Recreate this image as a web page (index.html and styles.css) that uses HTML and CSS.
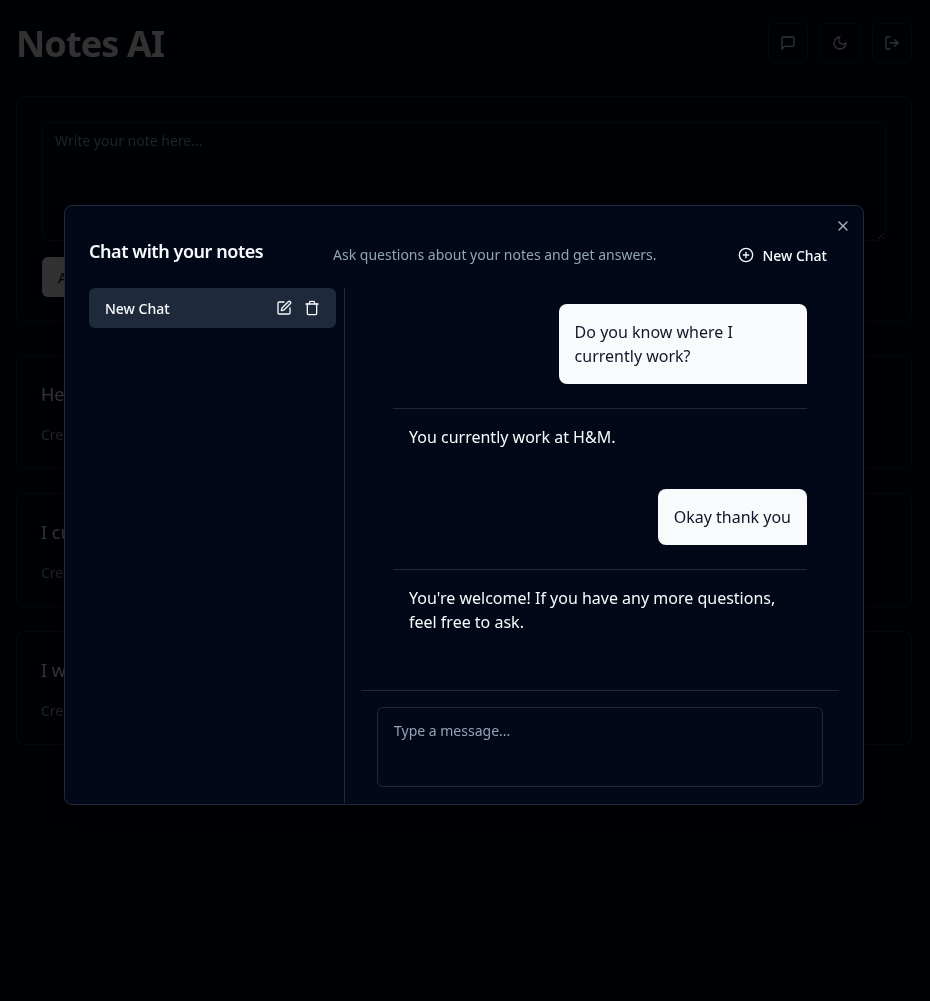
FILE: index.html
```html
<!DOCTYPE html>
<html lang="en">
<head>
  <meta charset="UTF-8" />
  <meta name="viewport" content="width=device-width, initial-scale=1.0" />
  <title>Notes AI</title>
  <link rel="stylesheet" href="styles.css">
</head>
<body>
  <div class="page">
    <header class="top">
      <h1>Notes AI</h1>
      <div class="top-actions">
        <button class="icon-btn" aria-label="Chat">
          <svg class="icon" viewBox="0 0 24 24"><path d="M21 15a2 2 0 0 1-2 2H7l-4 4V5a2 2 0 0 1 2-2h14a2 2 0 0 1 2 2z"/></svg>
        </button>
        <button class="icon-btn" aria-label="Theme">
          <svg class="icon" viewBox="0 0 24 24"><path d="M12 3a6 6 0 0 0 9 9 9 9 0 1 1-9-9Z"/></svg>
        </button>
        <button class="icon-btn" aria-label="Log out">
          <svg class="icon" viewBox="0 0 24 24"><path d="M9 21H5a2 2 0 0 1-2-2V5a2 2 0 0 1 2-2h4"/><path d="m16 17 5-5-5-5"/><path d="M21 12H9"/></svg>
        </button>
      </div>
    </header>

    <section class="card composer">
      <textarea class="note-input" placeholder="Write your note here..."></textarea>
      <button class="add-btn">Add Note</button>
    </section>

    <section class="notes">
      <article class="card note">
        <p class="note-text">Hello</p>
        <p class="note-date">Created: 1/15/2025</p>
      </article>
      <article class="card note">
        <p class="note-text">I currently work at H&amp;M</p>
        <p class="note-date">Created: 1/15/2025</p>
      </article>
      <article class="card note">
        <p class="note-text">I went to the gym today</p>
        <p class="note-date">Created: 1/15/2025</p>
      </article>
    </section>
  </div>

  <div class="overlay">
    <div class="dialog">
      <button class="close-btn" aria-label="Close">
        <svg class="icon" viewBox="0 0 24 24"><path d="M18 6 6 18"/><path d="m6 6 12 12"/></svg>
      </button>

      <div class="dialog-head">
        <h2>Chat with your notes</h2>
        <p class="subtitle">Ask questions about your notes and get answers.</p>
        <button class="new-chat">
          <svg class="icon" viewBox="0 0 24 24"><circle cx="12" cy="12" r="10"/><path d="M8 12h8"/><path d="M12 8v8"/></svg>
          New Chat
        </button>
      </div>

      <div class="dialog-body">
        <aside class="sidebar">
          <div class="chat-item">
            <span>New Chat</span>
            <div class="chat-item-actions">
              <svg class="icon" viewBox="0 0 24 24"><path d="M12 3H5a2 2 0 0 0-2 2v14a2 2 0 0 0 2 2h14a2 2 0 0 0 2-2v-7"/><path d="M18.375 2.625a1 1 0 0 1 3 3l-9.013 9.014a2 2 0 0 1-.853.505l-2.873.84a.5.5 0 0 1-.62-.62l.84-2.873a2 2 0 0 1 .506-.852z"/></svg>
              <svg class="icon" viewBox="0 0 24 24"><path d="M3 6h18"/><path d="M19 6v14c0 1-1 2-2 2H7c-1 0-2-1-2-2V6"/><path d="M8 6V4c0-1 1-2 2-2h4c1 0 2 1 2 2v2"/></svg>
            </div>
          </div>
        </aside>

        <div class="chat">
          <div class="messages">
            <div class="msg-user">Do you know where I currently work?</div>
            <div class="msg-bot">You currently work at H&amp;M.</div>
            <div class="msg-user">Okay thank you</div>
            <div class="msg-bot">You're welcome! If you have any more questions, feel free to ask.</div>
          </div>
          <div class="chat-input">
            <textarea class="message-input" placeholder="Type a message..."></textarea>
          </div>
        </div>
      </div>
    </div>
  </div>
</body>
</html>
```

FILE: styles.css
```css
:root {
  --bg: #020817;
  --text: #f8fafc;
  --muted: #94a3b8;
  --line: #1e293b;
}
* {
  margin: 0;
  padding: 0;
  box-sizing: border-box;
}
html, body {
  height: 100%;
  overflow: hidden;
}
body {
  font-family: "Noto Sans", sans-serif;
  background: var(--bg);
  color: var(--text);
}
button {
  font-family: inherit;
  color: inherit;
  background: transparent;
  border: none;
}
textarea {
  display: block;
  width: 100%;
  font-family: inherit;
  font-size: 14px;
  line-height: 20px;
  color: var(--text);
  background: var(--bg);
  border: 1px solid var(--line);
  border-radius: 6px;
  outline: none;
}
textarea::placeholder {
  color: var(--muted);
  opacity: 1;
}
.icon {
  display: block;
  width: 16px;
  height: 16px;
  fill: none;
  stroke: currentColor;
  stroke-width: 2;
  stroke-linecap: round;
  stroke-linejoin: round;
  flex-shrink: 0;
}

/* page behind the dialog */
.page {
  width: 896px;
  margin-left: 16px;
  will-change: transform;
}
.top {
  display: flex;
  justify-content: space-between;
  align-items: flex-start;
  padding-top: 23px;
  margin-bottom: 32px;
}
h1 {
  margin-top: 1px;
  font-size: 36px;
  line-height: 40px;
  font-weight: 700;
  letter-spacing: -0.025em;
}
.top-actions {
  display: flex;
  gap: 12px;
}
.icon-btn {
  display: flex;
  align-items: center;
  justify-content: center;
  width: 40px;
  height: 40px;
  border: 1px solid var(--line);
  border-radius: 6px;
}
.card {
  border: 1px solid var(--line);
  border-radius: 8px;
  padding: 24px;
}
.composer {
  padding: 25px 25px 24px;
  margin-bottom: 33px;
}
.note-input {
  height: 119px;
  padding: 8px 12px;
}
.add-btn {
  display: block;
  margin-top: 16px;
  height: 40px;
  padding: 0 16px;
  font-size: 14px;
  font-weight: 500;
  background: var(--text);
  color: #0f172a;
  border-radius: 6px;
}
.notes {
  display: flex;
  flex-direction: column;
  gap: 24px;
}
.note {
  padding-bottom: 23px;
}
.note-text {
  font-size: 18px;
  line-height: 28px;
}
.note-date {
  margin-top: 17px;
  font-size: 14px;
  line-height: 20px;
  color: var(--muted);
}

/* dialog */
.overlay {
  position: fixed;
  inset: 0;
  background: rgba(0, 0, 0, 0.8);
  padding: 205px 0 0 64px;
}
.dialog {
  position: relative;
  display: flex;
  flex-direction: column;
  width: 800px;
  height: 600px;
  padding: 24px 24px 1px;
  background: var(--bg);
  border: 1px solid var(--line);
  border-radius: 8px;
  box-shadow: 0 10px 15px -3px rgba(0,0,0,0.1);
  will-change: transform;
}
.close-btn {
  position: absolute;
  top: 12px;
  right: 12px;
  opacity: 0.7;
}
.dialog-head {
  display: flex;
  justify-content: space-between;
  align-items: center;
  padding-top: 5px;
  margin-bottom: 13px;
}
h2 {
  align-self: flex-start;
  margin-top: 2px;
  font-size: 18px;
  line-height: 28px;
  font-weight: 600;
  letter-spacing: -0.025em;
}
.subtitle {
  font-size: 14px;
  line-height: 20px;
  color: var(--muted);
}
.new-chat {
  display: flex;
  align-items: center;
  gap: 8px;
  height: 40px;
  padding: 0 12px;
  font-size: 14px;
  font-weight: 500;
}
.dialog-body {
  flex: 1;
  display: flex;
  min-height: 0;
}
.sidebar {
  width: 256px;
  padding-right: 8px;
  border-right: 1px solid var(--line);
}
.chat-item {
  display: flex;
  justify-content: space-between;
  align-items: center;
  height: 40px;
  padding: 0 16px;
  font-size: 14px;
  font-weight: 500;
  background: var(--line);
  border-radius: 6px;
}
.chat-item-actions {
  display: flex;
  gap: 12px;
}
.chat {
  flex: 1;
  display: flex;
  flex-direction: column;
  padding-left: 16px;
  min-width: 0;
}
.messages {
  flex: 1;
  display: flex;
  flex-direction: column;
  padding: 16px 32px;
  font-size: 16px;
  line-height: 24px;
}
.msg-user {
  align-self: flex-end;
  max-width: 60%;
  padding: 16px;
  margin-bottom: 24px;
  background: var(--text);
  color: #0f172a;
  border-radius: 8px 8px 0 8px;
}
.msg-bot {
  padding: 16px;
  margin-bottom: 24px;
  border-top: 1px solid var(--line);
}
.chat-input {
  padding: 16px;
  border-top: 1px solid var(--line);
}
.message-input {
  height: 80px;
  padding: 13px 16px 11px;
  resize: none;
}
```
